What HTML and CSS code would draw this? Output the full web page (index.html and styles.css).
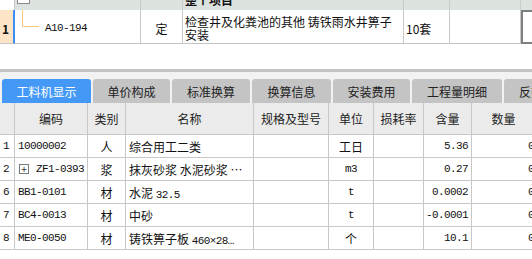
FILE: index.html
```html
<!DOCTYPE html>
<html lang="zh">
<head>
  <meta charset="UTF-8">
  <title>工料机显示</title>
  <link rel="stylesheet" href="styles.css">
</head>
<body>
  <div class="top">
    <div class="top-inner">
      <div class="trow thead">
        <div class="rn-blank"></div>
        <div><span class="chk"></span></div>
        <div></div>
        <div class="bold">整个项目</div>
        <div></div>
        <div></div>
        <div></div>
      </div>
      <div class="trow tbody">
        <div class="rn">1</div>
        <div class="tree"><span class="branch"></span><span class="m">A10-194</span></div>
        <div class="c">定</div>
        <div class="wrap">检查井及化粪池的其他 铸铁雨水井箅子安装</div>
        <div>10套</div>
        <div></div>
        <div class="sel"></div>
      </div>
    </div>
  </div>

  <div class="panel">
    <div class="tabs">
      <div class="tab active" style="width:89px">工料机显示</div>
      <div class="tab" style="width:77px">单价构成</div>
      <div class="tab" style="width:78px">标准换算</div>
      <div class="tab" style="width:79px">换算信息</div>
      <div class="tab" style="width:77px">安装费用</div>
      <div class="tab" style="width:90px">工程量明细</div>
      <div class="tab" style="width:78px">反查用料</div>
    </div>

    <div class="grid">
      <div class="row head">
        <div></div>
        <div>编码</div>
        <div>类别</div>
        <div>名称</div>
        <div>规格及型号</div>
        <div>单位</div>
        <div>损耗率</div>
        <div>含量</div>
        <div>数量</div>
        <div></div>
      </div>
      <div class="row">
        <div class="m">1</div>
        <div class="m">10000002</div>
        <div class="c">人</div>
        <div>综合用工二类</div>
        <div></div>
        <div class="c">工日</div>
        <div></div>
        <div class="m r">5.36</div>
        <div class="m qty">0.536</div>
        <div></div>
      </div>
      <div class="row">
        <div class="m">2</div>
        <div><span class="plus">+</span><span class="m">ZF1-0393</span></div>
        <div class="c">浆</div>
        <div><span>抹灰砂浆 水泥砂浆 …</span></div>
        <div></div>
        <div class="m c">m3</div>
        <div></div>
        <div class="m r">0.27</div>
        <div class="m qty">0.027</div>
        <div></div>
      </div>
      <div class="row">
        <div class="m">6</div>
        <div class="m">BB1-0101</div>
        <div class="c">材</div>
        <div><span>水泥 <span class="m">32.5</span></span></div>
        <div></div>
        <div class="m c">t</div>
        <div></div>
        <div class="m r">0.0002</div>
        <div class="m qty">0.00002</div>
        <div></div>
      </div>
      <div class="row">
        <div class="m">7</div>
        <div class="m">BC4-0013</div>
        <div class="c">材</div>
        <div>中砂</div>
        <div></div>
        <div class="m c">t</div>
        <div></div>
        <div class="m r">-0.0001</div>
        <div class="m qty">0.00001</div>
        <div></div>
      </div>
      <div class="row">
        <div class="m">8</div>
        <div class="m">ME0-0050</div>
        <div class="c">材</div>
        <div><span>铸铁箅子板 <span class="m">460×28…</span></span></div>
        <div></div>
        <div class="c">个</div>
        <div></div>
        <div class="m r">10.1</div>
        <div class="m qty">0.101</div>
        <div></div>
      </div>
    </div>
  </div>
</body>
</html>
```

FILE: styles.css
```css
body {
  margin: 0;
  width: 532px;
  height: 259px;
  overflow: hidden;
  background: #fff;
  font-family: "Noto Sans CJK SC", sans-serif;
  font-size: 12px;
  color: #111;
}

.m {
  font-family: "Liberation Mono", monospace;
  font-size: 11px;
  letter-spacing: -0.6px;
}

.c { justify-content: center; }
.r { justify-content: flex-end; }
.bold { font-weight: bold; }

/* upper grid */
.top {
  height: 44px;
  overflow: hidden;
}

.top-inner {
  margin-top: -12px;
  width: 620px;
}

.trow {
  display: grid;
  grid-template-columns: 15px 126px 42px 221px 46px 71px 99px;
}

.trow > div {
  box-sizing: border-box;
  display: flex;
  align-items: center;
  padding: 0 2px;
  white-space: nowrap;
  overflow: hidden;
}

.thead { height: 22px; }

.thead > div {
  background: #dce3de;
  border-right: 1px solid #c6cec9;
  align-items: flex-start;
  padding-top: 3px;
}

.thead .rn-blank {
  background: #fff;
  border-right: 1px solid #c8c8c8;
}

.chk {
  width: 11px;
  height: 11px;
  border: 1px solid #8a8a8a;
  background: #fff;
}

.tbody { height: 34px; }

.tbody > div {
  border-right: 1px solid #c8c8c8;
  border-bottom: 1px solid #c4c4c4;
  padding-top: 3px;
}

.tbody .rn {
  background: #fde4c6;
  border-right: 2px solid #3d8ef0;
  font-weight: bold;
  padding: 3px 0 0 2px;
}

.tree {
  position: relative;
  padding-left: 30px !important;
}

.branch {
  position: absolute;
  left: 7px;
  top: 0;
  width: 16px;
  height: 16px;
  border-left: 1px solid #fbc779;
  border-bottom: 1px solid #fbc779;
}

.tbody .wrap {
  white-space: normal;
  line-height: 12.5px;
  padding-top: 4px;
}

.tbody .sel {
  border: 2px solid #7f7f7f;
}

/* lower panel */
.panel {
  margin-top: 25px;
  border-top: 3px solid #c4c4c4;
  background: #f2f2f2;
}

.tabs {
  display: flex;
  gap: 2px;
  padding: 7px 0 0 2px;
  white-space: nowrap;
}

.tab {
  flex: none;
  height: 24px;
  border-radius: 3px 3px 0 0;
  background: #c4c4c4;
  color: #222;
  display: flex;
  align-items: center;
  justify-content: center;
  overflow: hidden;
}

.tab.active {
  background: #4499f7;
  color: #fff;
}

.grid {
  background: #fff;
  height: 200px;
  width: 620px;
}

.row {
  display: grid;
  grid-template-columns: 15px 73px 38px 128px 75px 45px 50px 48px 64px 84px;
  height: 23px;
}

.row > div {
  box-sizing: border-box;
  display: flex;
  align-items: center;
  padding: 0 3px;
  border-right: 1px solid #c8c8c8;
  border-bottom: 1px solid #c8c8c8;
  white-space: nowrap;
  overflow: hidden;
}

.row.head {
  height: 32px;
  background: #ebebeb;
  color: #222;
}

.row.head > div { justify-content: center; }

.row > div.qty {
  padding-left: 56px;
}

.plus {
  box-sizing: border-box;
  width: 10px;
  height: 10px;
  border: 1px solid #777;
  font-size: 10px;
  line-height: 7px;
  text-align: center;
  margin: 0 7px 0 1px;
  color: #333;
}
```
